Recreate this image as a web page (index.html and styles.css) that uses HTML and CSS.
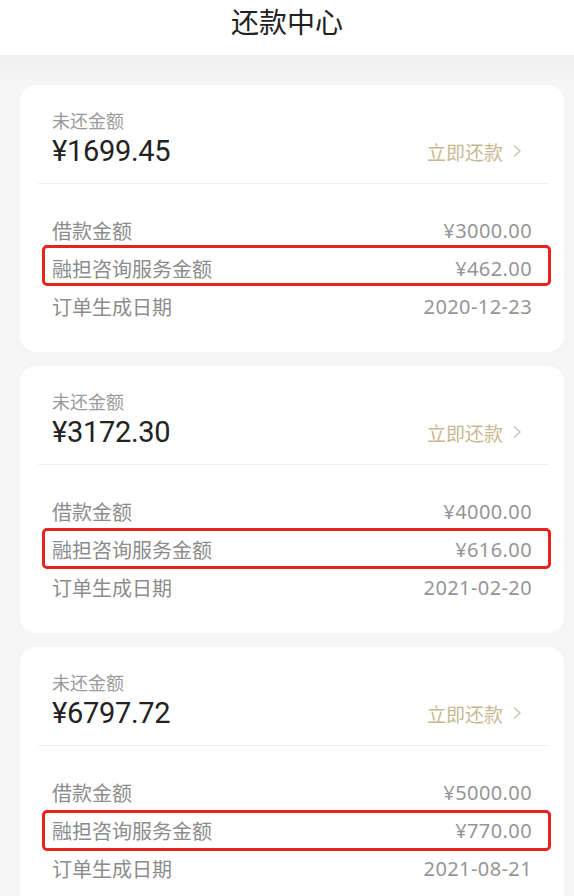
FILE: index.html
```html
<!DOCTYPE html>
<html lang="zh-CN">
<head>
  <meta charset="UTF-8">
  <meta name="viewport" content="width=device-width, initial-scale=1.0">
  <title>还款中心</title>
  <link rel="stylesheet" href="styles.css">
</head>
<body>
  <header class="top-bar">
    <h1>还款中心</h1>
  </header>

  <main class="list">
    <section class="card">
      <div class="due-label">未还金额</div>
      <div class="due-row">
        <span class="due-amount">¥1699.45</span>
        <a class="pay-link" href="#">立即还款
          <svg class="chevron" width="10" height="14" viewBox="0 0 10 14"><polyline points="2,1.5 8,7 2,12.5" /></svg>
        </a>
      </div>
      <div class="divider"></div>
      <div class="info-row"><span>借款金额</span><span class="num">¥3000.00</span></div>
      <div class="info-row marked m1"><span>融担咨询服务金额</span><span class="num">¥462.00</span></div>
      <div class="info-row"><span>订单生成日期</span><span class="num">2020-12-23</span></div>
    </section>

    <section class="card">
      <div class="due-label">未还金额</div>
      <div class="due-row">
        <span class="due-amount">¥3172.30</span>
        <a class="pay-link" href="#">立即还款
          <svg class="chevron" width="10" height="14" viewBox="0 0 10 14"><polyline points="2,1.5 8,7 2,12.5" /></svg>
        </a>
      </div>
      <div class="divider"></div>
      <div class="info-row"><span>借款金额</span><span class="num">¥4000.00</span></div>
      <div class="info-row marked m2"><span>融担咨询服务金额</span><span class="num">¥616.00</span></div>
      <div class="info-row"><span>订单生成日期</span><span class="num">2021-02-20</span></div>
    </section>

    <section class="card">
      <div class="due-label">未还金额</div>
      <div class="due-row">
        <span class="due-amount">¥6797.72</span>
        <a class="pay-link" href="#">立即还款
          <svg class="chevron" width="10" height="14" viewBox="0 0 10 14"><polyline points="2,1.5 8,7 2,12.5" /></svg>
        </a>
      </div>
      <div class="divider"></div>
      <div class="info-row"><span>借款金额</span><span class="num">¥5000.00</span></div>
      <div class="info-row marked m3"><span>融担咨询服务金额</span><span class="num">¥770.00</span></div>
      <div class="info-row"><span>订单生成日期</span><span class="num">2021-08-21</span></div>
    </section>
  </main>
</body>
</html>
```

FILE: styles.css
```css
body {
  margin: 0;
  font-family: Roboto, "Noto Sans CJK SC", sans-serif;
  background-color: #f5f5f5;
  color: #222;
}
.top-bar {
  height: 55px;
  background-color: #fff;
  display: flex;
  align-items: center;
  justify-content: center;
}
.top-bar h1 {
  margin: 0 0 8px 0;
  font-size: 28px;
  font-weight: 400;
  color: #222;
  line-height: 36px;
}
.list {
  padding: 30px 10px 0 20px;
  background: linear-gradient(#efefef, #f5f5f5 28px);
}
.card {
  background-color: #fff;
  border-radius: 16px;
  padding: 25px 32px 27px 32px;
  margin-bottom: 14px;
}
.due-label {
  font-size: 18px;
  line-height: 24px;
  color: #9b9b9b;
}
.due-row {
  display: flex;
  align-items: center;
  justify-content: space-between;
  height: 34px;
}
.due-amount {
  font-size: 29px;
  color: #222;
  letter-spacing: -0.3px;
}
.pay-link {
  display: flex;
  align-items: center;
  gap: 9px;
  margin-right: 10px;
  font-size: 19px;
  color: #c8b890;
  text-decoration: none;
}
.chevron polyline {
  fill: none;
  stroke: #c9c3b6;
  stroke-width: 1.4;
}
.divider {
  height: 1px;
  background-color: #f0f0f0;
  margin: 15px -16px 27px -14px;
}
.info-row {
  display: flex;
  justify-content: space-between;
  align-items: center;
  height: 38px;
  font-size: 20px;
  color: #8c8c8c;
}
.info-row .num {
  font-family: "Noto Sans", sans-serif;
  font-size: 20px;
  letter-spacing: 0.4px;
  color: #959595;
}
.marked {
  position: relative;
}
.marked::after {
  content: '';
  position: absolute;
  left: -10px;
  right: -19px;
  top: -4px;
  height: 35px;
  border: 3px solid #e8221c;
  border-radius: 5px;
}
.m2::after {
  top: -2px;
}
.m3::after {
  top: -1px;
}
```
